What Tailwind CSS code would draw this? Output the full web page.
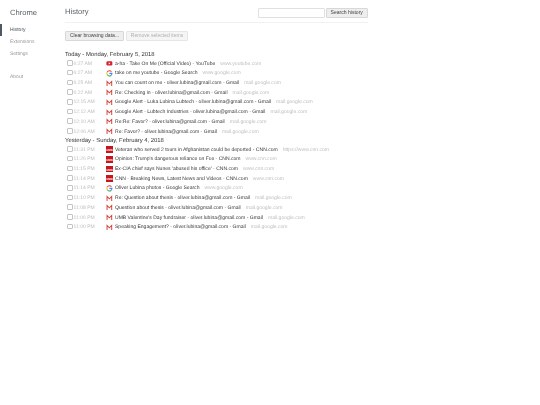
<!DOCTYPE html>
<html lang="en">
<head>
	<meta charset="UTF-8">
	<title>History</title>
	<script src="https://cdn.jsdelivr.net/npm/@tailwindcss/browser@4"></script>
</head>
<body class="bg-white font-['Liberation_Sans',Arial,sans-serif] [text-rendering:geometricPrecision]">
<div class="flex w-[540px] h-[405px] overflow-hidden blur-[0.25px]">
	<!-- Sidebar -->
	<div class="w-[65px] shrink-0">
		<h1 class="h-[24px] pl-[10px] pt-[8px] text-[7.6px] leading-[9px] text-[#5c6166]">Chrome</h1>
		<ul class="text-[5px] text-[#9a9a9a]">
			<li class="h-[12px] pl-[8px] leading-[13px] border-l-[2px] border-[#4e5764] text-[#464e5a]">History</li>
			<li class="h-[12px] pl-[10px] leading-[13px]">Extensions</li>
			<li class="h-[12px] pl-[10px] leading-[13px]">Settings</li>
			<li class="h-[12px] mt-[11px] pl-[10px] leading-[13px]">About</li>
		</ul>
	</div>
	<!-- Main -->
	<div class="w-[303px] shrink-0">
		<div class="flex items-center justify-between h-[23px] pt-[4px] border-b border-[#f1f1f1]">
			<h2 class="-mt-[2px] text-[7.6px] text-[#5c6166]">History</h2>
			<div class="flex gap-[1px]">
				<input type="text" class="w-[67px] h-[9.5px] border border-[#e0e0e0] rounded-[1px] bg-white">
				<button class="w-[42.5px] h-[9.5px] border border-[#d8d8d8] rounded-[1px] bg-[#eeeeee] text-[5.06px] text-[#444]">Search history</button>
			</div>
		</div>
		<div class="flex gap-[2px] mt-[7.5px]">
			<button class="w-[59px] h-[10px] border border-[#d8d8d8] rounded-[1px] bg-[#eeeeee] text-[5.06px] text-[#444]">Clear browsing data...</button>
			<button class="w-[62px] h-[10px] border border-[#e6e6e6] rounded-[1px] bg-[#f5f5f5] text-[5.06px] text-[#b0b0b0]">Remove selected items</button>
		</div>

		<h3 class="mt-[10.2px] h-[9px] text-[5.9px] leading-[9px] text-[#333]">Today - Monday, February 5, 2018</h3>
		<ul class="text-[5.06px] leading-[9.7px]">
			<li class="flex items-center h-[9.7px]">
				<span class="w-[5.5px] h-[5.5px] mb-[3px] border-[0.5px] border-[#c4c4c4] rounded-[1px] mr-[1px] ml-[2px] shrink-0"></span>
				<span class="w-[32.5px] shrink-0 text-[#bdbdbd]">6:27 AM</span>
				<svg class="w-[6.75px] h-[6.75px] mb-[2px] mr-[2.25px] shrink-0" viewBox="0 0 16 16"><rect x="1" y="3" width="14" height="10" rx="3" fill="#d8222a"/><path d="M6.5 5.5v5l4-2.5z" fill="#fff"/></svg>
				<span class="text-[#3a3a3a]">a-ha - Take On Me (Official Video) - YouTube</span><span class="ml-[5px] text-[#bdbdbd]">www.youtube.com</span>
			</li>
			<li class="flex items-center h-[9.7px]">
				<span class="w-[5.5px] h-[5.5px] mb-[3px] border-[0.5px] border-[#c4c4c4] rounded-[1px] mr-[1px] ml-[2px] shrink-0"></span>
				<span class="w-[32.5px] shrink-0 text-[#bdbdbd]">6:27 AM</span>
				<svg class="w-[6.75px] h-[6.75px] mb-[2px] mr-[2.25px] shrink-0" viewBox="0 0 16 16" fill="none" stroke-width="2.4"><path d="M13 4.2A6 6 0 0 0 3 5" stroke="#ea4335"/><path d="M3 5a6 6 0 0 0 0 6" stroke="#fbbc05"/><path d="M3 11a6 6 0 0 0 9 2" stroke="#34a853"/><path d="M12 13a6 6 0 0 0 2-5H8" stroke="#4285f4"/></svg>
				<span class="text-[#3a3a3a]">take on me youtube - Google Search</span><span class="ml-[5px] text-[#bdbdbd]">www.google.com</span>
			</li>
			<li class="flex items-center h-[9.7px]">
				<span class="w-[5.5px] h-[5.5px] mb-[3px] border-[0.5px] border-[#c4c4c4] rounded-[1px] mr-[1px] ml-[2px] shrink-0"></span>
				<span class="w-[32.5px] shrink-0 text-[#bdbdbd]">6:25 AM</span>
				<svg class="w-[6.75px] h-[6.75px] mb-[2px] mr-[2.25px] shrink-0" viewBox="0 0 16 16" fill="none" stroke="#d8483c" stroke-width="2.4"><path d="M2.5 14V3.5L8 9l5.5-5.5V14"/></svg>
				<span class="text-[#3a3a3a]">You can count on me - oliver.lubina@gmail.com - Gmail</span><span class="ml-[5px] text-[#bdbdbd]">mail.google.com</span>
			</li>
			<li class="flex items-center h-[9.7px]">
				<span class="w-[5.5px] h-[5.5px] mb-[3px] border-[0.5px] border-[#c4c4c4] rounded-[1px] mr-[1px] ml-[2px] shrink-0"></span>
				<span class="w-[32.5px] shrink-0 text-[#bdbdbd]">6:22 AM</span>
				<svg class="w-[6.75px] h-[6.75px] mb-[2px] mr-[2.25px] shrink-0" viewBox="0 0 16 16" fill="none" stroke="#d8483c" stroke-width="2.4"><path d="M2.5 14V3.5L8 9l5.5-5.5V14"/></svg>
				<span class="text-[#3a3a3a]">Re: Checking in - oliver.lubina@gmail.com - Gmail</span><span class="ml-[5px] text-[#bdbdbd]">mail.google.com</span>
			</li>
			<li class="flex items-center h-[9.7px]">
				<span class="w-[5.5px] h-[5.5px] mb-[3px] border-[0.5px] border-[#c4c4c4] rounded-[1px] mr-[1px] ml-[2px] shrink-0"></span>
				<span class="w-[32.5px] shrink-0 text-[#bdbdbd]">12:15 AM</span>
				<svg class="w-[6.75px] h-[6.75px] mb-[2px] mr-[2.25px] shrink-0" viewBox="0 0 16 16" fill="none" stroke="#d8483c" stroke-width="2.4"><path d="M2.5 14V3.5L8 9l5.5-5.5V14"/></svg>
				<span class="text-[#3a3a3a]">Google Alert - Luka Lubina Lubtech - oliver.lubina@gmail.com - Gmail</span><span class="ml-[5px] text-[#bdbdbd]">mail.google.com</span>
			</li>
			<li class="flex items-center h-[9.7px]">
				<span class="w-[5.5px] h-[5.5px] mb-[3px] border-[0.5px] border-[#c4c4c4] rounded-[1px] mr-[1px] ml-[2px] shrink-0"></span>
				<span class="w-[32.5px] shrink-0 text-[#bdbdbd]">12:12 AM</span>
				<svg class="w-[6.75px] h-[6.75px] mb-[2px] mr-[2.25px] shrink-0" viewBox="0 0 16 16" fill="none" stroke="#d8483c" stroke-width="2.4"><path d="M2.5 14V3.5L8 9l5.5-5.5V14"/></svg>
				<span class="text-[#3a3a3a]">Google Alert - Lubtech Industries - oliver.lubina@gmail.com - Gmail</span><span class="ml-[5px] text-[#bdbdbd]">mail.google.com</span>
			</li>
			<li class="flex items-center h-[9.7px]">
				<span class="w-[5.5px] h-[5.5px] mb-[3px] border-[0.5px] border-[#c4c4c4] rounded-[1px] mr-[1px] ml-[2px] shrink-0"></span>
				<span class="w-[32.5px] shrink-0 text-[#bdbdbd]">12:10 AM</span>
				<svg class="w-[6.75px] h-[6.75px] mb-[2px] mr-[2.25px] shrink-0" viewBox="0 0 16 16" fill="none" stroke="#d8483c" stroke-width="2.4"><path d="M2.5 14V3.5L8 9l5.5-5.5V14"/></svg>
				<span class="text-[#3a3a3a]">Re:Re: Favor? - oliver.lubina@gmail.com - Gmail</span><span class="ml-[5px] text-[#bdbdbd]">mail.google.com</span>
			</li>
			<li class="flex items-center h-[9.7px]">
				<span class="w-[5.5px] h-[5.5px] mb-[3px] border-[0.5px] border-[#c4c4c4] rounded-[1px] mr-[1px] ml-[2px] shrink-0"></span>
				<span class="w-[32.5px] shrink-0 text-[#bdbdbd]">12:06 AM</span>
				<svg class="w-[6.75px] h-[6.75px] mb-[2px] mr-[2.25px] shrink-0" viewBox="0 0 16 16" fill="none" stroke="#d8483c" stroke-width="2.4"><path d="M2.5 14V3.5L8 9l5.5-5.5V14"/></svg>
				<span class="text-[#3a3a3a]">Re: Favor? - oliver.lubina@gmail.com - Gmail</span><span class="ml-[5px] text-[#bdbdbd]">mail.google.com</span>
			</li>
		</ul>

		<h3 class="h-[8.5px] text-[5.9px] leading-[8.5px] text-[#333]">Yesterday - Sunday, February 4, 2018</h3>
		<ul class="text-[5.06px] leading-[9.7px]">
			<li class="flex items-center h-[9.7px]">
				<span class="w-[5.5px] h-[5.5px] mb-[3px] border-[0.5px] border-[#c4c4c4] rounded-[1px] mr-[1px] ml-[2px] shrink-0"></span>
				<span class="w-[32.5px] shrink-0 text-[#bdbdbd]">11:31 PM</span>
				<svg class="w-[6.75px] h-[6.75px] mb-[2px] mr-[2.25px] shrink-0" viewBox="0 0 16 16"><rect width="16" height="16" fill="#c8141c"/><text x="8" y="11" text-anchor="middle" font-size="7" font-weight="700" fill="#fff">CNN</text></svg>
				<span class="text-[#3a3a3a]">Veteran who served 2 tours in Afghanistan could be deported - CNN.com</span><span class="ml-[5px] text-[#bdbdbd]">https://www.cnn.com</span>
			</li>
			<li class="flex items-center h-[9.7px]">
				<span class="w-[5.5px] h-[5.5px] mb-[3px] border-[0.5px] border-[#c4c4c4] rounded-[1px] mr-[1px] ml-[2px] shrink-0"></span>
				<span class="w-[32.5px] shrink-0 text-[#bdbdbd]">11:26 PM</span>
				<svg class="w-[6.75px] h-[6.75px] mb-[2px] mr-[2.25px] shrink-0" viewBox="0 0 16 16"><rect width="16" height="16" fill="#c8141c"/><text x="8" y="11" text-anchor="middle" font-size="7" font-weight="700" fill="#fff">CNN</text></svg>
				<span class="text-[#3a3a3a]">Opinion: Trump's dangerous reliance on Fox - CNN.com</span><span class="ml-[5px] text-[#bdbdbd]">www.cnn.com</span>
			</li>
			<li class="flex items-center h-[9.7px]">
				<span class="w-[5.5px] h-[5.5px] mb-[3px] border-[0.5px] border-[#c4c4c4] rounded-[1px] mr-[1px] ml-[2px] shrink-0"></span>
				<span class="w-[32.5px] shrink-0 text-[#bdbdbd]">11:15 PM</span>
				<svg class="w-[6.75px] h-[6.75px] mb-[2px] mr-[2.25px] shrink-0" viewBox="0 0 16 16"><rect width="16" height="16" fill="#c8141c"/><text x="8" y="11" text-anchor="middle" font-size="7" font-weight="700" fill="#fff">CNN</text></svg>
				<span class="text-[#3a3a3a]">Ex-CIA chief says Nunes 'abused his office' - CNN.com</span><span class="ml-[5px] text-[#bdbdbd]">www.cnn.com</span>
			</li>
			<li class="flex items-center h-[9.7px]">
				<span class="w-[5.5px] h-[5.5px] mb-[3px] border-[0.5px] border-[#c4c4c4] rounded-[1px] mr-[1px] ml-[2px] shrink-0"></span>
				<span class="w-[32.5px] shrink-0 text-[#bdbdbd]">11:14 PM</span>
				<svg class="w-[6.75px] h-[6.75px] mb-[2px] mr-[2.25px] shrink-0" viewBox="0 0 16 16"><rect width="16" height="16" fill="#c8141c"/><text x="8" y="11" text-anchor="middle" font-size="7" font-weight="700" fill="#fff">CNN</text></svg>
				<span class="text-[#3a3a3a]">CNN - Breaking News, Latest News and Videos - CNN.com</span><span class="ml-[5px] text-[#bdbdbd]">www.cnn.com</span>
			</li>
			<li class="flex items-center h-[9.7px]">
				<span class="w-[5.5px] h-[5.5px] mb-[3px] border-[0.5px] border-[#c4c4c4] rounded-[1px] mr-[1px] ml-[2px] shrink-0"></span>
				<span class="w-[32.5px] shrink-0 text-[#bdbdbd]">11:14 PM</span>
				<svg class="w-[6.75px] h-[6.75px] mb-[2px] mr-[2.25px] shrink-0" viewBox="0 0 16 16" fill="none" stroke-width="2.4"><path d="M13 4.2A6 6 0 0 0 3 5" stroke="#ea4335"/><path d="M3 5a6 6 0 0 0 0 6" stroke="#fbbc05"/><path d="M3 11a6 6 0 0 0 9 2" stroke="#34a853"/><path d="M12 13a6 6 0 0 0 2-5H8" stroke="#4285f4"/></svg>
				<span class="text-[#3a3a3a]">Oliver Lubina photos - Google Search</span><span class="ml-[5px] text-[#bdbdbd]">www.google.com</span>
			</li>
			<li class="flex items-center h-[9.7px]">
				<span class="w-[5.5px] h-[5.5px] mb-[3px] border-[0.5px] border-[#c4c4c4] rounded-[1px] mr-[1px] ml-[2px] shrink-0"></span>
				<span class="w-[32.5px] shrink-0 text-[#bdbdbd]">11:10 PM</span>
				<svg class="w-[6.75px] h-[6.75px] mb-[2px] mr-[2.25px] shrink-0" viewBox="0 0 16 16" fill="none" stroke="#d8483c" stroke-width="2.4"><path d="M2.5 14V3.5L8 9l5.5-5.5V14"/></svg>
				<span class="text-[#3a3a3a]">Re: Question about thesis - oliver.lubina@gmail.com - Gmail</span><span class="ml-[5px] text-[#bdbdbd]">mail.google.com</span>
			</li>
			<li class="flex items-center h-[9.7px]">
				<span class="w-[5.5px] h-[5.5px] mb-[3px] border-[0.5px] border-[#c4c4c4] rounded-[1px] mr-[1px] ml-[2px] shrink-0"></span>
				<span class="w-[32.5px] shrink-0 text-[#bdbdbd]">11:08 PM</span>
				<svg class="w-[6.75px] h-[6.75px] mb-[2px] mr-[2.25px] shrink-0" viewBox="0 0 16 16" fill="none" stroke="#d8483c" stroke-width="2.4"><path d="M2.5 14V3.5L8 9l5.5-5.5V14"/></svg>
				<span class="text-[#3a3a3a]">Question about thesis - oliver.lubina@gmail.com - Gmail</span><span class="ml-[5px] text-[#bdbdbd]">mail.google.com</span>
			</li>
			<li class="flex items-center h-[9.7px]">
				<span class="w-[5.5px] h-[5.5px] mb-[3px] border-[0.5px] border-[#c4c4c4] rounded-[1px] mr-[1px] ml-[2px] shrink-0"></span>
				<span class="w-[32.5px] shrink-0 text-[#bdbdbd]">11:06 PM</span>
				<svg class="w-[6.75px] h-[6.75px] mb-[2px] mr-[2.25px] shrink-0" viewBox="0 0 16 16" fill="none" stroke="#d8483c" stroke-width="2.4"><path d="M2.5 14V3.5L8 9l5.5-5.5V14"/></svg>
				<span class="text-[#3a3a3a]">UMB Valentine's Day fundraiser - oliver.lubina@gmail.com - Gmail</span><span class="ml-[5px] text-[#bdbdbd]">mail.google.com</span>
			</li>
			<li class="flex items-center h-[9.7px]">
				<span class="w-[5.5px] h-[5.5px] mb-[3px] border-[0.5px] border-[#c4c4c4] rounded-[1px] mr-[1px] ml-[2px] shrink-0"></span>
				<span class="w-[32.5px] shrink-0 text-[#bdbdbd]">11:00 PM</span>
				<svg class="w-[6.75px] h-[6.75px] mb-[2px] mr-[2.25px] shrink-0" viewBox="0 0 16 16" fill="none" stroke="#d8483c" stroke-width="2.4"><path d="M2.5 14V3.5L8 9l5.5-5.5V14"/></svg>
				<span class="text-[#3a3a3a]">Speaking Engagement? - oliver.lubina@gmail.com - Gmail</span><span class="ml-[5px] text-[#bdbdbd]">mail.google.com</span>
			</li>
		</ul>
	</div>
</div>
</body>
</html>
